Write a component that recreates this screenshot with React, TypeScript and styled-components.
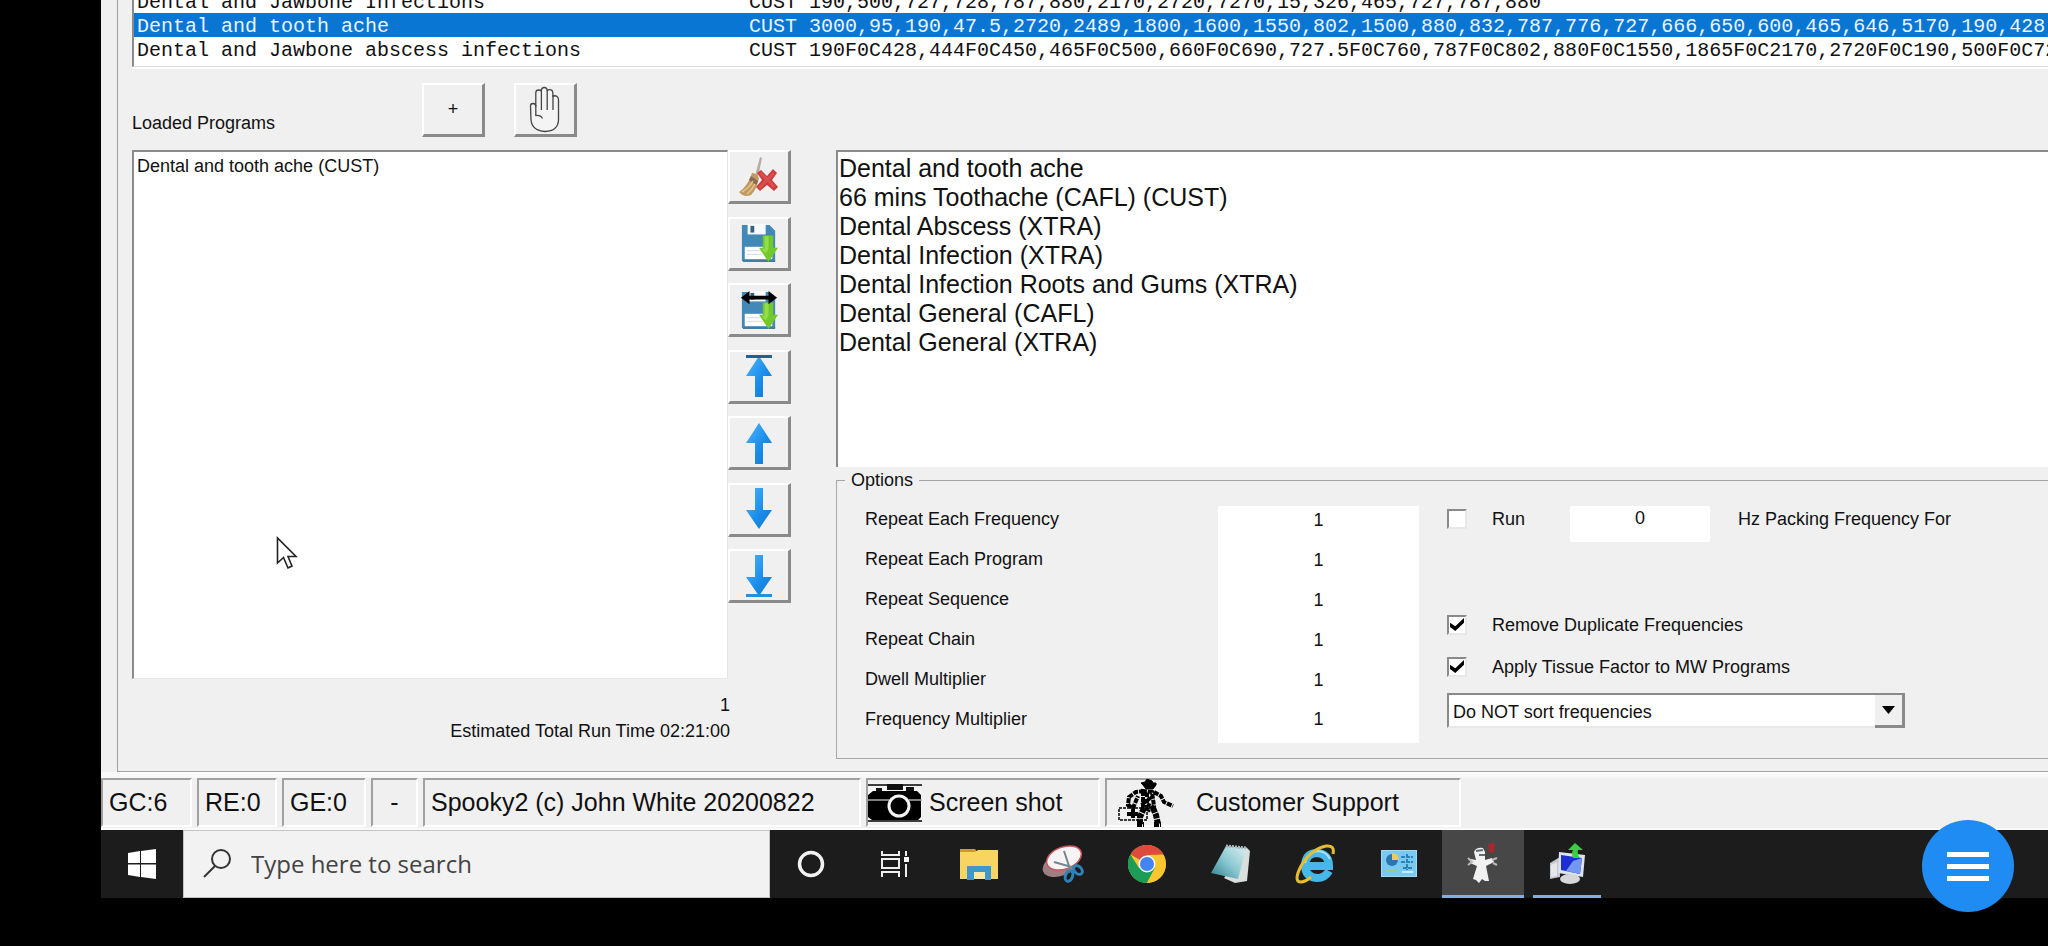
import React from "react";
import styled, { createGlobalStyle } from "styled-components";

const sans = '"Liberation Sans", Arial, sans-serif';
const face = "#f0f0f0";
const edge = "#8a8a8a";

const GlobalStyle = createGlobalStyle`
  *, *::before, *::after { box-sizing: border-box; }
  body { margin: 0; background: #000; font-family: ${sans}; color: #111; overflow-x: hidden; }
  button, input, select, textarea { font: inherit; color: inherit; margin: 0; border-radius: 0; }
`;

const Screen = styled.div`
  min-height: 100vh;
  padding-left: 101px;
  background: #000;
  overflow: hidden;
`;

const AppWindow = styled.main`
  background: ${face};
  padding-left: 16px;
  border-bottom: 6px solid #f8f8f8;
`;

const Panel = styled.section`
  border-left: 1px solid #a0a0a0;
  border-bottom: 1px solid #a0a0a0;
  box-shadow: 0 1px 0 #fff;
  padding: 0 0 12px 14px;
`;

const ResultBox = styled.div`
  height: 67px;
  display: flex;
  flex-direction: column;
  justify-content: flex-end;
  overflow: hidden;
  background: #fff;
  border-left: 2px solid ${edge};
  border-bottom: 1px solid #dedede;
  box-shadow: 0 2px 0 #fff;
  padding-bottom: 5px;
`;

const ResultTable = styled.table`
  width: 100%;
  flex: none;
  table-layout: fixed;
  border-collapse: collapse;
  font: 20px/20px "Liberation Mono", "Courier New", monospace;
  white-space: nowrap;
`;

const ResultRow = styled.tr<{ $selected?: boolean }>`
  background: ${(p) => (p.$selected ? "#0a76d3" : "#fff")};
  color: ${(p) => (p.$selected ? "#e8f4ff" : "#111")};
`;

const ResultCell = styled.td<{ $width?: number }>`
  width: ${(p) => (p.$width ? `${p.$width}px` : "auto")};
  height: 24px;
  padding: 4px 0 0 3px;
  overflow: hidden;
  & + & { padding-left: 0; }
`;

const Toolbar = styled.div`
  display: flex;
  align-items: flex-end;
  padding: 16px 0 13px;
`;

const Heading = styled.h2`
  width: 290px;
  margin: 0;
  padding-bottom: 2px;
  font-size: 18px;
  font-weight: 400;
  line-height: 24px;
`;

const BevelButton = styled.button`
  width: 63px;
  height: 54px;
  flex: none;
  display: flex;
  align-items: center;
  justify-content: center;
  padding: 0;
  background: ${face};
  border: 2px solid #fff;
  border-right: 3px solid ${edge};
  border-bottom: 3px solid ${edge};
  font-size: 18px;
  & + & { margin-left: 29px; }
`;

const Body = styled.div`
  display: flex;
  gap: 45px;
`;

const LoadedColumn = styled.div`
  flex: none;
  width: 659px;
`;

const LoadedArea = styled.div`
  position: relative;
  display: flex;
  align-items: flex-start;
`;

const LoadedList = styled.ul`
  width: 596px;
  height: 529px;
  margin: 0;
  padding: 2px 3px;
  list-style: none;
  background: #fff;
  border: 2px solid ${edge};
  border-right: 1px solid #e6e6e6;
  border-bottom: 1px solid #e6e6e6;
  font-size: 18px;
  line-height: 24px;
`;

const ActionColumn = styled.div`
  height: 453px;
  display: flex;
  flex-direction: column;
  justify-content: space-between;
  ${BevelButton} + ${BevelButton} { margin-left: 0; }
`;

const Totals = styled.div`
  width: 598px;
  padding-top: 13px;
  text-align: right;
  font-size: 18px;
  line-height: 26px;
`;

const Pointer = styled.svg`
  position: absolute;
  left: 144px;
  top: 386px;
`;

const DetailColumn = styled.div`
  flex: 1;
  min-width: 0;
  display: flex;
  flex-direction: column;
`;

const Notes = styled.textarea`
  display: block;
  width: 100%;
  height: 317px;
  padding: 2px 1px;
  resize: none;
  outline: none;
  background: #fff;
  border: 0 solid ${edge};
  border-width: 2px 0 0 2px;
  font: 25px/29px ${sans};
`;

const Options = styled.fieldset`
  display: grid;
  grid-template-columns: 554px 1fr;
  column-gap: 28px;
  min-width: 0;
  margin: 1px 0 0;
  padding: 14px 0 15px 28px;
  border: 1px solid #a6a6a6;
  border-right: 0;
  font-size: 18px;
  line-height: 26px;
`;

const Legend = styled.legend`
  margin-left: -20px;
  padding: 0 6px;
  line-height: 24px;
`;

const RepeatGrid = styled.div`
  display: grid;
  grid-template-columns: 353px 201px;
  grid-template-rows: repeat(5, 40px) 37px;
`;

const ValueInput = styled.input`
  width: 100%;
  height: 100%;
  min-width: 0;
  padding: 0 0 11px;
  border: 0;
  outline: none;
  background: #fff;
  text-align: center;
`;

const PackingRow = styled.div`
  display: grid;
  grid-template-columns: 123px 140px 1fr;
  grid-template-rows: 36px;
  margin-bottom: 62px;
`;

const PackingUnit = styled.span`
  padding-left: 28px;
`;

const Choice = styled.label<{ $tall?: boolean }>`
  display: flex;
  align-items: center;
  gap: 25px;
  height: ${(p) => (p.$tall ? 42 : 26)}px;
`;

const Check = styled.input`
  appearance: none;
  flex: none;
  width: 20px;
  height: 20px;
  background: #fff;
  border: 2px solid ${edge};
  border-right-color: #e8e8e8;
  border-bottom-color: #e8e8e8;
  &:checked::after {
    content: "";
    display: block;
    width: 14px;
    height: 13px;
    margin: 1px;
    background: #000;
    clip-path: polygon(0 36%, 38% 64%, 100% 0, 100% 36%, 38% 100%, 0 70%);
  }
`;

const SortPicker = styled.div`
  position: relative;
  width: 458px;
  margin-top: 5px;
`;

const SortSelect = styled.select`
  appearance: none;
  display: block;
  width: 100%;
  height: 35px;
  padding: 2px 34px 0 4px;
  background: #fff;
  border: 2px solid ${edge};
  border-bottom-color: #e8e8e8;
  outline: none;
`;

const SortArrow = styled.span`
  position: absolute;
  top: 2px;
  right: 0;
  bottom: 0;
  width: 30px;
  display: flex;
  align-items: center;
  justify-content: center;
  background: ${face};
  border-right: 3px solid ${edge};
  border-bottom: 3px solid ${edge};
  pointer-events: none;
`;

const StatusBar = styled.footer`
  display: flex;
  gap: 5px;
  height: 52px;
  padding-bottom: 1px;
  background: ${face};
  border-bottom: 2px solid #fafafa;
`;

const StatusCell = styled.div<{ $width: number; $center?: boolean }>`
  width: ${(p) => p.$width}px;
  flex: none;
  display: flex;
  align-items: center;
  justify-content: ${(p) => (p.$center ? "center" : "flex-start")};
  padding: 0 0 0 ${(p) => (p.$center ? 0 : 6)}px;
  background: ${face};
  border: 2px solid #a0a0a0;
  border-right-color: #fff;
  border-bottom-color: #fff;
  font-size: 25px;
  line-height: 29px;
  white-space: nowrap;
`;

const StatusButton = styled(StatusCell)<{ $inset: number; $gap: number }>`
  padding-left: ${(p) => p.$inset}px;
  gap: ${(p) => p.$gap}px;
`;

const Taskbar = styled.nav`
  display: flex;
  height: 68px;
  background: #1c1c1c;
`;

const StartButton = styled.button`
  width: 82px;
  flex: none;
  display: flex;
  align-items: center;
  justify-content: center;
  padding: 0;
  border: 0;
  background: transparent;
`;

const SearchBox = styled.label`
  width: 587px;
  flex: none;
  display: flex;
  align-items: center;
  gap: 20px;
  padding-left: 19px;
  background: #f2f2f2;
  border: 1px solid #c4c4c4;
`;

const SearchInput = styled.input`
  flex: 1;
  min-width: 0;
  padding: 0;
  border: 0;
  outline: none;
  background: transparent;
  font: 24px/32px "Open Sans", "Noto Sans", sans-serif;
  &::placeholder { color: #444; opacity: 1; }
`;

const TaskList = styled.div`
  display: flex;
  gap: 2px;
`;

const TaskButton = styled.button<{ $active?: boolean; $running?: boolean }>`
  position: relative;
  width: 82px;
  display: flex;
  align-items: center;
  justify-content: center;
  padding: 0;
  border: 0;
  background: ${(p) => (p.$active ? "#474747" : "transparent")};
  &::after {
    content: "";
    display: ${(p) => (p.$active || p.$running ? "block" : "none")};
    position: absolute;
    bottom: 0;
    left: ${(p) => (p.$active ? 0 : 7)}px;
    right: ${(p) => (p.$active ? 0 : 7)}px;
    height: 3px;
    background: #7fb0df;
  }
`;

const MenuFab = styled.button`
  position: fixed;
  right: 34px;
  bottom: 34px;
  width: 92px;
  height: 92px;
  padding: 0;
  display: flex;
  flex-direction: column;
  align-items: center;
  justify-content: center;
  gap: 7px;
  border: 0;
  && { border-radius: 50%; }
  background: #1f8cf3;
`;

const FabBar = styled.span`
  width: 42px;
  height: 5px;
  background: #fff;
`;

const results = [
  {
    name: "Dental and Jawbone Infections",
    values: "190,500,727,728,787,880,2170,2720,7270,15,326,465,727,787,880",
  },
  {
    name: "Dental and tooth ache",
    values:
      "3000,95,190,47.5,2720,2489,1800,1600,1550,802,1500,880,832,787,776,727,666,650,600,465,646,5170,190,428,",
    selected: true,
  },
  {
    name: "Dental and Jawbone abscess infections",
    values:
      "190F0C428,444F0C450,465F0C500,660F0C690,727.5F0C760,787F0C802,880F0C1550,1865F0C2170,2720F0C190,500F0C72",
  },
];

const notes = [
  "Dental and tooth ache",
  "66 mins Toothache (CAFL) (CUST)",
  "Dental Abscess (XTRA)",
  "Dental Infection (XTRA)",
  "Dental Infection Roots and Gums (XTRA)",
  "Dental General (CAFL)",
  "Dental General (XTRA)",
].join("\n");

const repeats = [
  "Repeat Each Frequency",
  "Repeat Each Program",
  "Repeat Sequence",
  "Repeat Chain",
  "Dwell Multiplier",
  "Frequency Multiplier",
];

const HandIcon = () => (
  <svg width="32" height="47" viewBox="0 0 32 47" fill="#f4f4f4" stroke="#444" strokeWidth="1.3" strokeLinejoin="round">
    <path d="M1.5 20Q1.5 17.5 4 17.5Q6.5 17.5 6.8 20V6.5Q7 4 9.5 4Q12 4 12.3 5Q12.5 1.5 15.3 1.5Q18 1.5 18.2 4.5Q21 2.6 23 4.5Q24 5.5 24 10.5Q26 9 28 10.5Q29.5 11.5 29.5 14V34Q29 45 16 45.5Q3 44.5 2 34Z" />
    <path d="M6.8 19V29.5Q12 29 13.5 32.5M12.4 5V24M18.2 4V24M24 9V24" fill="none" />
  </svg>
);

const BroomIcon = () => (
  <svg width="42" height="42" viewBox="0 0 42 42">
    <path d="M22 1L24 2L20 21L17 20Z" fill="#b9ab9e" />
    <path d="M14 17Q18 17 21 22Q19 33 13 39Q6 42 1 36Q10 30 14 17Z" fill="#c39a62" />
    <path d="M13 20L20 25L18 29L11 24Z" fill="#8d6a55" />
    <path d="M4 36Q11 32 15 25M9 38Q14 34 17 28" stroke="#e2c58e" strokeWidth="1.5" fill="none" />
    <path d="M19 17L23 14L29 20L35 13L39 17L34 24L40 31L36 35L29 29L22 35L18 31L24 24Z" fill="#cb3c3d" />
    <path d="M22 17L30 24L36 31M36 17L21 32" stroke="#d9504e" strokeWidth="3" fill="none" />
  </svg>
);

const DiskIcon = ({ swap }: { swap?: boolean }) => (
  <svg width="38" height="42" viewBox="0 0 40 44">
    <path d="M2 3H31L37 9V41H2Z" fill="#4389b7" />
    <path d="M8 2H27V13H8Z" fill="#f7fbfd" />
    <path d="M11 4H15V11H11Z" fill="#34617f" />
    <path d="M5 26H34V39H5Z" fill="#fff" />
    <path d="M7 30H24M7 34H24" stroke="#d9e1e6" strokeWidth="1.5" />
    <path d="M3 41H37" stroke="#477ba0" strokeWidth="2" />
    <path d="M24 14H35V27H40L30 42L20 27H24Z" fill="#72c92c" />
    <path d="M26 15H30V28L27 33L23 28H26Z" fill="#93dd4a" />
    {swap && <path d="M1 9L10 2V7H30V2L39 9L30 16V11H10V16Z" fill="#000" />}
  </svg>
);

const ArrowIcon = ({ down, bar }: { down?: boolean; bar?: boolean }) => (
  <svg width="26" height="44" viewBox="0 0 26 44">
    <defs>
      <linearGradient id="arrowFill" x1="0" x2="1" y1="0" y2="1">
        <stop offset="0" stopColor="#4db5ff" />
        <stop offset="0.6" stopColor="#188be8" />
        <stop offset="1" stopColor="#1576cf" />
      </linearGradient>
    </defs>
    {down ? (
      <path d="M9 1H17V23H26L13 42L0 23H9Z" fill="url(#arrowFill)" />
    ) : (
      <path d="M13 2L26 22H17V43H9V22H0Z" fill="url(#arrowFill)" />
    )}
    {bar && <rect x="0" y={down ? 40 : 1} width="26" height="3" fill={down ? "#258fe0" : "#245f8e"} />}
  </svg>
);

const CameraIcon = () => (
  <svg width="54" height="40" viewBox="0 0 54 40">
    <rect width="54" height="40" fill="#f4f4f4" />
    <path d="M0 2H54M0 38H54" stroke="#000" strokeWidth="1.6" />
    <path d="M19 1H35V7H19ZM8 5H14V8H8ZM38 4H46V8H38Z" fill="#111" />
    <path d="M5 8H49L53 12V34L50 37H4L0 34V12Z" fill="#000" />
    <path d="M0 17H21M41 17H54" stroke="#a9a9a9" strokeWidth="1.5" />
    <circle cx="31" cy="23" r="11.5" fill="#f4f4f4" />
    <circle cx="31" cy="23" r="8.5" fill="#000" />
  </svg>
);

const WorkerIcon = () => (
  <svg width="58" height="48" viewBox="0 0 58 48" fill="none" stroke="#000">
    <path d="M1 29H29V41H1Z" strokeWidth="1.5" strokeDasharray="3 1" />
    <path d="M23 4L27 3L29 0L34 2L35 4H38V6L35 10H28L25 6Z" fill="#000" />
    <path d="M26 12L18 13L11 18L10 26L15 29L20 17M25 12V27L31 31L36 27L34 13ZM36 13L43 17L46 23L55 27" strokeWidth="4" strokeDasharray="5 1" />
    <path d="M29 14V28M27 14L32 19L26 24L33 27" strokeWidth="4" strokeDasharray="4 2" />
    <path d="M26 29L22 38V46M35 29L38 36L40 45M19 46H26M36 46H43" strokeWidth="6" strokeDasharray="5 1" />
    <path d="M9 35H20M15 30V39" strokeWidth="4" />
  </svg>
);

const WindowsIcon = () => (
  <svg width="30" height="30" viewBox="0 0 30 30" fill="#fff">
    <path d="M1 4L13 2V14H1ZM14 2L29 0V14H14ZM1 15.5H13V28L1 26ZM14 15.5H29V30L14 28Z" />
  </svg>
);

const SearchIcon = () => (
  <svg width="28" height="30" viewBox="0 0 28 30" fill="none" stroke="#333" strokeWidth="2">
    <circle cx="18" cy="10" r="9" />
    <path d="M12 17L1 28" />
  </svg>
);

const CortanaIcon = () => (
  <svg width="30" height="30" viewBox="0 0 30 30">
    <circle cx="15" cy="15" r="11.5" fill="none" stroke="#f2f2f2" strokeWidth="3.5" />
  </svg>
);

const TaskViewIcon = () => (
  <svg width="30" height="28" viewBox="0 0 30 28" fill="none" stroke="#eee" strokeWidth="2">
    <path d="M2 1V5H19V1M2 27V22H19V27M2 9H19V18H2ZM26 1V6M26 14V27" />
    <path d="M24 7H29V12H24Z" fill="#fff" stroke="none" />
  </svg>
);

const FolderIcon = () => (
  <svg width="38" height="32" viewBox="0 0 38 32">
    <path d="M0 1H15L18 5H0Z" fill="#c99a2d" />
    <path d="M0 4H15L18 2H38V31H0Z" fill="#f8d462" />
    <path d="M7 18H31V32H25V24H14V32H7Z" fill="#3f97cf" />
    <path d="M14 24H25V31H14Z" fill="#fbe7a0" />
  </svg>
);

const SnipIcon = () => (
  <svg width="42" height="38" viewBox="0 0 42 38">
    <ellipse cx="18" cy="20" rx="18" ry="11" transform="rotate(-20 18 20)" fill="#9d7f83" />
    <ellipse cx="22" cy="13" rx="18" ry="11" transform="rotate(-20 22 13)" fill="#f7f4f5" stroke="#c9565c" strokeWidth="1.5" />
    <path d="M22 6L28 24M12 17L33 23" stroke="#75868f" strokeWidth="2" />
    <ellipse cx="27" cy="31" rx="3.5" ry="5.5" transform="rotate(20 27 31)" fill="none" stroke="#2d83b8" strokeWidth="3" />
    <ellipse cx="36" cy="25" rx="3.5" ry="5" transform="rotate(-45 36 25)" fill="none" stroke="#2d83b8" strokeWidth="3" />
  </svg>
);

const ChromeIcon = () => (
  <svg width="38" height="38" viewBox="0 0 38 38">
    <circle cx="19" cy="19" r="19" fill="#f9c72d" />
    <path d="M19 19L2.5 9.5A19 19 0 0 1 35.5 9.5L19 10Z" fill="#dd4b3e" />
    <path d="M2.5 9.5A19 19 0 0 0 19 38L27 23L19 19L11 23Z" fill="#1d9c58" />
    <path d="M19 10H35.5A19 19 0 0 1 19 38L27 23Z" fill="#f9c72d" />
    <circle cx="19" cy="19" r="8.5" fill="#f5f5f5" />
    <circle cx="19" cy="19" r="7" fill="#4284f0" />
  </svg>
);

const NotepadIcon = () => (
  <svg width="42" height="40" viewBox="0 0 42 40">
    <defs>
      <linearGradient id="pad" x1="0" x2="1" y1="1" y2="0">
        <stop offset="0" stopColor="#2d818c" />
        <stop offset="0.5" stopColor="#8dc9d3" />
        <stop offset="1" stopColor="#dceff0" />
      </linearGradient>
    </defs>
    <path d="M36 3L40 7L37 37L25 39L14 34Z" fill="#d8dfdc" />
    <path d="M16 2L36 4L28 35L1 29Z" fill="url(#pad)" />
    <path d="M16 2L36 4" stroke="#aab8ba" strokeWidth="3" strokeDasharray="2 1" />
  </svg>
);

const ExplorerIcon = () => (
  <svg width="42" height="40" viewBox="0 0 42 40" fill="none">
    <path d="M35 27Q31 34 23 34Q11 33 11 21Q12 9 23 9Q35 10 35 22H13" stroke="#45b8e8" strokeWidth="8" />
    <path d="M11 19Q13 9 23 7Q32 7 36 15" stroke="#a7e3fa" strokeWidth="2" />
    <path d="M39 10Q41 1 32 2Q17 5 7 22Q-1 38 7 38Q11 38 17 33" stroke="#e6bd31" strokeWidth="3" />
  </svg>
);

const ControlPanelIcon = () => (
  <svg width="36" height="28" viewBox="0 0 36 28">
    <rect width="36" height="27" fill="#9bdcf8" />
    <rect x="1" y="1" width="34" height="25" fill="#7ac9f0" />
    <circle cx="11" cy="10" r="6" fill="#2a77ae" />
    <path d="M11 10V3A7 7 0 0 1 18 10Z" fill="#f0c95b" />
    <path d="M20 7H32M20 12H32M22 18H32M26 4V20" stroke="#2b83bd" strokeWidth="2" strokeDasharray="4 1" />
    <path d="M4 21H16" stroke="#9dcf71" strokeWidth="2" />
    <path d="M21 22H32" stroke="#c6eefc" strokeWidth="2" />
  </svg>
);

const GhostIcon = () => (
  <svg width="32" height="42" viewBox="0 0 32 42">
    <path d="M7 9Q9 4 16 5L18 9V17L25 15L27 19L19 23L22 38H18L15 36L12 40L9 37L6 36L10 23L3 20L4 16L9 17Z" fill="#f1f1f1" />
    <path d="M9 8L16 7M12 12H18" stroke="#5c6c74" strokeWidth="2" />
    <path d="M1 15L5 19L1 22M25 17L30 15M26 20L30 22" stroke="#b9b9b9" strokeWidth="2" fill="none" />
    <path d="M21 1L28 0L27 10L22 9Z" fill="#a52a2c" />
  </svg>
);

const RemoteIcon = () => (
  <svg width="40" height="42" viewBox="0 0 40 42">
    <path d="M3 20L13 14V34L3 36Z" fill="#c3c9cc" />
    <path d="M4 22L10 19V33L4 34Z" fill="#e5e8e9" />
    <path d="M12 9L38 12L36 34L11 30Z" fill="#dce3ef" />
    <path d="M14 12L35 15L33 31L14 27Z" fill="#1d2fd0" />
    <path d="M26 18L35 15L33 31L19 28Z" fill="#7298f1" />
    <ellipse cx="23" cy="36" rx="10" ry="5" fill="#d7d7d7" />
    <path d="M28 0L36 7H31Q30 11 33 15H26Q24 10 26 7H21Z" fill="#35cf42" />
  </svg>
);

const tasks = [
  { label: "Cortana", icon: <CortanaIcon /> },
  { label: "Task View", icon: <TaskViewIcon /> },
  { label: "File Explorer", icon: <FolderIcon /> },
  { label: "Snipping Tool", icon: <SnipIcon /> },
  { label: "Chrome", icon: <ChromeIcon /> },
  { label: "Notepad", icon: <NotepadIcon /> },
  { label: "Internet Explorer", icon: <ExplorerIcon /> },
  { label: "Control Panel", icon: <ControlPanelIcon /> },
  { label: "Spooky2", icon: <GhostIcon />, active: true },
  { label: "Remote Desktop", icon: <RemoteIcon />, running: true },
];

const actions = [
  { label: "Clear programs", icon: <BroomIcon /> },
  { label: "Save programs", icon: <DiskIcon /> },
  { label: "Save combined programs", icon: <DiskIcon swap /> },
  { label: "Move to top", icon: <ArrowIcon bar /> },
  { label: "Move up", icon: <ArrowIcon /> },
  { label: "Move down", icon: <ArrowIcon down /> },
  { label: "Move to bottom", icon: <ArrowIcon down bar /> },
];

export default function App() {
  return (
    <Screen>
      <GlobalStyle />
      <AppWindow>
        <Panel>
          <ResultBox>
            <ResultTable>
              <tbody>
                {results.map((r) => (
                  <ResultRow key={r.name} $selected={r.selected}>
                    <ResultCell $width={615}>{r.name}</ResultCell>
                    <ResultCell $width={60}>CUST</ResultCell>
                    <ResultCell>{r.values}</ResultCell>
                  </ResultRow>
                ))}
              </tbody>
            </ResultTable>
          </ResultBox>
          <Toolbar>
            <Heading>Loaded Programs</Heading>
            <BevelButton type="button" aria-label="Add program">+</BevelButton>
            <BevelButton type="button" aria-label="Hold">
              <HandIcon />
            </BevelButton>
          </Toolbar>
          <Body>
            <LoadedColumn>
              <LoadedArea>
                <LoadedList>
                  <li>Dental and tooth ache (CUST)</li>
                </LoadedList>
                <ActionColumn>
                  {actions.map((a) => (
                    <BevelButton key={a.label} type="button" aria-label={a.label}>
                      {a.icon}
                    </BevelButton>
                  ))}
                </ActionColumn>
                <Pointer width="22" height="34" viewBox="0 0 22 34">
                  <path d="M1.5 2V27L7.5 21.5L12 32L16 30L12 20.5H20Z" fill="#fff" stroke="#222" strokeWidth="1.6" />
                </Pointer>
              </LoadedArea>
              <Totals>
                <div>1</div>
                <div>Estimated Total Run Time 02:21:00</div>
              </Totals>
            </LoadedColumn>
            <DetailColumn>
              <Notes aria-label="Program notes" readOnly spellCheck={false} value={notes} />
              <Options>
                <Legend>Options</Legend>
                <RepeatGrid>
                  {repeats.map((label, i) => (
                    <React.Fragment key={label}>
                      <label htmlFor={`repeat-${i}`}>{label}</label>
                      <ValueInput id={`repeat-${i}`} defaultValue="1" />
                    </React.Fragment>
                  ))}
                </RepeatGrid>
                <div>
                  <PackingRow>
                    <Choice>
                      <Check type="checkbox" />
                      Run
                    </Choice>
                    <ValueInput aria-label="Packing frequency" defaultValue="0" />
                    <PackingUnit>Hz Packing Frequency For</PackingUnit>
                  </PackingRow>
                  <Choice $tall>
                    <Check type="checkbox" defaultChecked />
                    Remove Duplicate Frequencies
                  </Choice>
                  <Choice $tall>
                    <Check type="checkbox" defaultChecked />
                    Apply Tissue Factor to MW Programs
                  </Choice>
                  <SortPicker>
                    <SortSelect aria-label="Sort order">
                      <option>Do NOT sort frequencies</option>
                    </SortSelect>
                    <SortArrow>
                      <svg width="13" height="8" viewBox="0 0 13 8">
                        <path d="M0 0H13L6.5 8Z" fill="#000" />
                      </svg>
                    </SortArrow>
                  </SortPicker>
                </div>
              </Options>
            </DetailColumn>
          </Body>
        </Panel>
      </AppWindow>
      <StatusBar>
        <StatusCell $width={91}>GC:6</StatusCell>
        <StatusCell $width={80}>RE:0</StatusCell>
        <StatusCell $width={84}>GE:0</StatusCell>
        <StatusCell $width={47} $center>-</StatusCell>
        <StatusCell $width={438}>Spooky2 (c) John White 20200822</StatusCell>
        <StatusButton as="button" $width={234} $inset={0} $gap={7}>
          <CameraIcon />
          Screen shot
        </StatusButton>
        <StatusButton as="button" $width={356} $inset={11} $gap={20}>
          <WorkerIcon />
          Customer Support
        </StatusButton>
      </StatusBar>
      <Taskbar>
        <StartButton type="button" aria-label="Start">
          <WindowsIcon />
        </StartButton>
        <SearchBox>
          <SearchIcon />
          <SearchInput type="text" aria-label="Search" placeholder="Type here to search" />
        </SearchBox>
        <TaskList>
          {tasks.map((t) => (
            <TaskButton key={t.label} type="button" aria-label={t.label} $active={t.active} $running={t.running}>
              {t.icon}
            </TaskButton>
          ))}
        </TaskList>
      </Taskbar>
      <MenuFab type="button" aria-label="Menu">
        <FabBar />
        <FabBar />
        <FabBar />
      </MenuFab>
    </Screen>
  );
}
